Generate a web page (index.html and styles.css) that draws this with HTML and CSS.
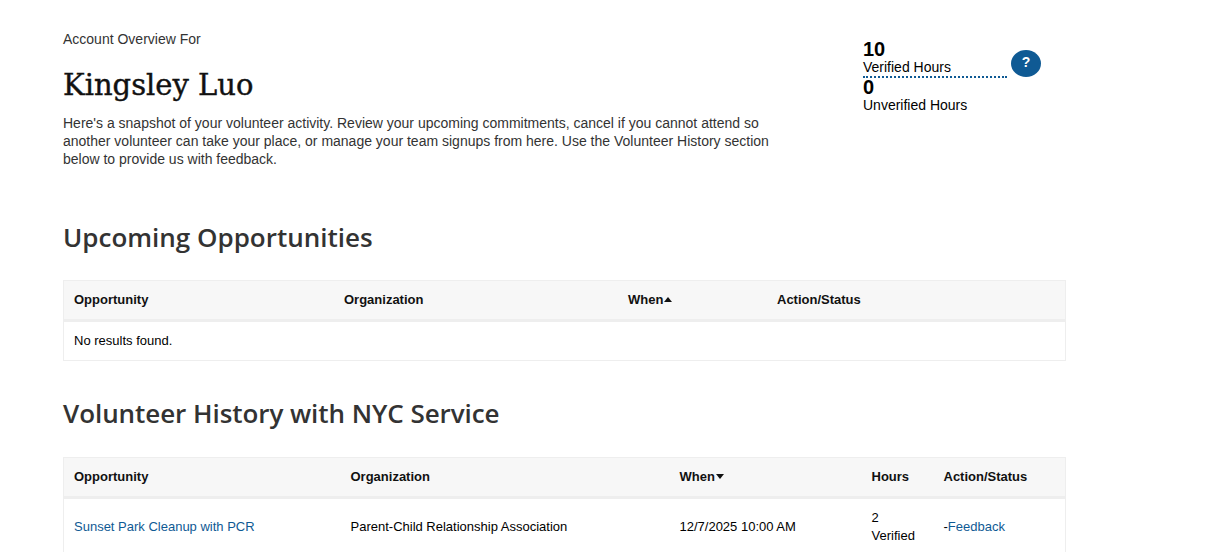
FILE: index.html
```html
<!DOCTYPE html>
<html lang="en">
<head>
  <meta charset="UTF-8">
  <title>Account Overview</title>
  <link rel="stylesheet" href="styles.css">
</head>
<body>
  <div class="page">
    <div class="overview">
      <div class="intro">
        <p class="eyebrow">Account Overview For</p>
        <h1>Kingsley Luo</h1>
        <p class="snapshot">Here's a snapshot of your volunteer activity. Review your upcoming commitments, cancel if you cannot attend so another volunteer can take your place, or manage your team signups from here. Use the Volunteer History section below to provide us with feedback.</p>
      </div>
      <div class="hours">
        <div class="hours-list">
          <div class="hours-item verified">
            <strong>10</strong>
            <span>Verified Hours</span>
          </div>
          <div class="hours-item">
            <strong>0</strong>
            <span>Unverified Hours</span>
          </div>
        </div>
        <a class="help" href="#">?</a>
      </div>
    </div>

    <h2 class="upcoming-title">Upcoming Opportunities</h2>
    <table class="upcoming">
      <thead>
        <tr>
          <th class="col-a">Opportunity</th>
          <th class="col-b">Organization</th>
          <th class="col-c">When<span class="sort-up"></span></th>
          <th>Action/Status</th>
        </tr>
      </thead>
      <tbody>
        <tr><td colspan="4">No results found.</td></tr>
      </tbody>
    </table>

    <h2 class="history-title">Volunteer History with NYC Service</h2>
    <table class="history">
      <thead>
        <tr>
          <th class="col-a">Opportunity</th>
          <th class="col-b">Organization</th>
          <th class="col-c">When<span class="sort-down"></span></th>
          <th class="col-d">Hours</th>
          <th>Action/Status</th>
        </tr>
      </thead>
      <tbody>
        <tr>
          <td><a href="#">Sunset Park Cleanup with PCR</a></td>
          <td>Parent-Child Relationship Association</td>
          <td>12/7/2025 10:00 AM</td>
          <td>2<br>Verified</td>
          <td>-<a href="#">Feedback</a></td>
        </tr>
      </tbody>
    </table>
  </div>
</body>
</html>
```

FILE: styles.css
```css
html, body { margin: 0; height: 552px; overflow: hidden; background: #fff; }
body { font-family: "Liberation Sans", Arial, sans-serif; font-size: 14px; line-height: 18px; color: #000; }
a { color: #0f5a94; text-decoration: none; }

.page { width: 1003px; padding: 30px 0 0 63px; }

.overview { display: flex; height: 170px; }
.intro { width: 720px; color: #333; }
.eyebrow { margin: 0; }
.intro h1 { margin: 17px 0 9px; font-family: "DejaVu Serif", serif; font-weight: 400; font-size: 29px; line-height: 40px; color: #111; -webkit-text-stroke: 0.4px #111; }
.snapshot { margin: 0; }

.hours { display: flex; align-items: flex-start; margin-left: 80px; }
.hours-list { width: 144px; margin-top: 9px; }
.hours-item strong { display: block; font-size: 20px; line-height: 20px; }
.hours-item span { display: block; margin-top: -1px; line-height: 18px; }
.hours-item.verified { border-bottom: 2px dotted #0f5a94; margin-bottom: -1px; }
.help { width: 30px; height: 27px; line-height: 25px; margin: 20px 0 0 4px; border-radius: 50%; background: #0f5a94; color: #fff; font-weight: 700; text-align: center; }

h2 { margin: 0; font-family: "Open Sans", sans-serif; font-weight: 600; font-size: 26px; line-height: 36px; color: #333; }
.upcoming-title { margin-top: 19px; margin-bottom: 25px; }
.history-title { margin-top: 34px; margin-bottom: 26px; letter-spacing: -0.06px; }

table { width: 1003px; table-layout: fixed; border-collapse: collapse; border: 1px solid #eee; font-size: 13px; }
th { text-align: left; background: #f7f7f7; border-bottom: 3px solid #eee; height: 38px; padding: 0 10px; font-weight: 700; color: #111; }
td { padding: 0 10px; height: 38px; }

.upcoming .col-a { width: 250px; }
.upcoming .col-b { width: 264px; }
.upcoming .col-c { width: 129px; }
.history .col-a { width: 256.5px; }
.history .col-b { width: 309px; }
.history .col-c { width: 172px; }
.history .col-d { width: 52px; }
.history td { height: 56px; }

.sort-up, .sort-down { display: inline-block; width: 0; height: 0; margin-left: 1px; vertical-align: 2px; border-left: 4.5px solid transparent; border-right: 4.5px solid transparent; }
.sort-up { border-bottom: 5px solid #111; }
.sort-down { border-top: 5px solid #111; }
```
